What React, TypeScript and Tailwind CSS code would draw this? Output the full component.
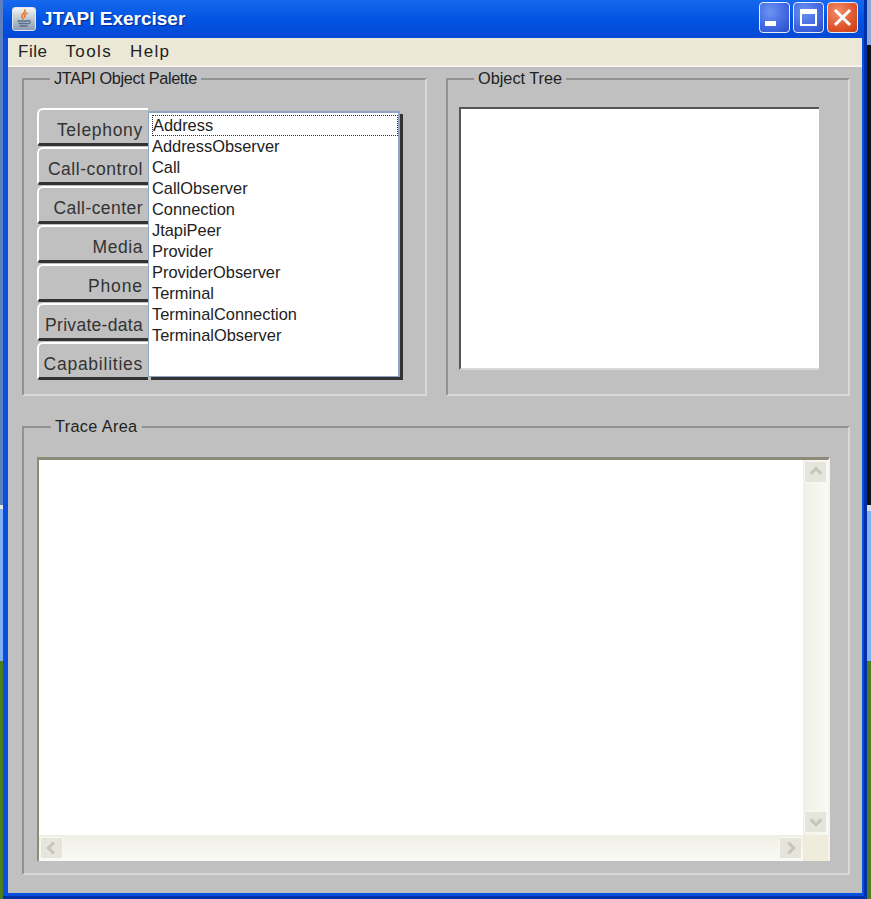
const tabs = [
  { name: "Telephony", cls: "tracking-[0.7px]" },
  { name: "Call-control", cls: "tracking-[0.55px]" },
  { name: "Call-center", cls: "tracking-[0.45px]" },
  { name: "Media", cls: "tracking-[0.55px]" },
  { name: "Phone", cls: "tracking-[0.9px]" },
  { name: "Private-data", cls: "tracking-[0.3px]" },
  { name: "Capabilities", cls: "tracking-[0.75px]" },
];
const objects = [
  "Address",
  "AddressObserver",
  "Call",
  "CallObserver",
  "Connection",
  "JtapiPeer",
  "Provider",
  "ProviderObserver",
  "Terminal",
  "TerminalConnection",
  "TerminalObserver",
];

function JavaIcon() {
  return (
    <div className="w-[24px] h-[24px] rounded-[3px] border border-[#dfe6f2] bg-gradient-to-b from-[#f4f4f0] to-[#8c9cb4] flex items-center justify-center">
      <svg width="20" height="20" viewBox="0 0 20 20" fill="none">
        <path d="M11 1c1 2-3 4-3 6s1 2 1 3M13 4c-2 1-3 2-2 4" stroke="#e8742a" strokeWidth="1.6" strokeLinecap="round" />
        <path d="M4 12h10M5 14.5h8M6 17h7" stroke="#5a6f8c" strokeWidth="1.5" strokeLinecap="round" />
        <path d="M14 11.5c3-.5 3 3-.5 3.5" stroke="#5a6f8c" strokeWidth="1.2" />
      </svg>
    </div>
  );
}

function CaptionButton({ kind }: { kind: "min" | "max" | "close" }) {
  const face =
    kind === "close"
      ? "bg-[radial-gradient(circle_at_35%_30%,#f0906c,#e0552c_60%,#c43a10)]"
      : "bg-[radial-gradient(circle_at_35%_30%,#6f93f2,#3f66e0_60%,#2a4cc8)]";
  return (
    <div className={`w-[31px] h-[31px] rounded-[4px] border border-[#e4ecfa] flex items-center justify-center ${face}`}>
      {kind === "min" && <div className="w-[11px] h-[5px] bg-white mt-[12px] mr-[8px]" />}
      {kind === "max" && (
        <div className="w-[17px] h-[17px] border-2 border-white border-t-[5px]" />
      )}
      {kind === "close" && (
        <svg width="19" height="19" viewBox="0 0 19 19">
          <path d="M3 3l13 13M16 3L3 16" stroke="#fff" strokeWidth="3" strokeLinecap="square" />
        </svg>
      )}
    </div>
  );
}

function Group({ title, legendClass, className, children }: { title: string; legendClass: string; className: string; children?: React.ReactNode }) {
  return (
    <div className={`relative border-2 border-t-[#929292] border-l-[#929292] border-r-[#d8d8d8] border-b-[#d8d8d8] ${className}`}>
      <span className={`absolute top-[-12px] bg-[#c0c0c0] px-[4px] text-[16.3px] leading-[20px] text-[#222] ${legendClass}`}>
        {title}
      </span>
      {children}
    </div>
  );
}

function ScrollButton({ dir }: { dir: "up" | "down" | "left" | "right" }) {
  const paths = {
    up: "M4 12l6-6 6 6",
    down: "M4 7l6 6 6-6",
    left: "M12 4l-6 6 6 6",
    right: "M7 4l6 6-6 6",
  };
  return (
    <div className="w-[23px] h-[22px] rounded-[2px] border border-[#f8f8f2] bg-[#e6e5dc] flex items-center justify-center">
      <svg width="18" height="18" viewBox="0 0 20 20" fill="none">
        <path d={paths[dir]} stroke="#c6c6bc" strokeWidth="3.4" />
      </svg>
    </div>
  );
}

export default function App() {
  return (
    <div className="w-[871px] h-[899px] flex overflow-hidden font-['Liberation_Sans',Arial,sans-serif] bg-[#111]">
      <div className="w-[3px] flex flex-col">
        <div className="h-[505px] bg-[#5c7fc0]" />
        <div className="h-[4px] bg-[#e8e8e8]" />
        <div className="h-[152px] bg-[#7fb2f5]" />
        <div className="flex-1 bg-[#4c7f1c]" />
      </div>

      <div className="w-[864px] flex flex-col bg-[#0a4ee0] border-r-[3px] border-b-[3px] border-[#0230a8] pb-[3px]">
        {/* title bar */}
        <div className="h-[38px] shrink-0 flex items-center pl-[9px] pr-[6px] bg-gradient-to-b from-[#1668ee] via-[#0454e2] to-[#0348d6]">
          <JavaIcon />
          <span className="ml-[6px] text-[19px] font-bold text-white [text-shadow:1px_1px_1px_#0a2a90]">JTAPI Exerciser</span>
          <div className="ml-auto flex gap-[3px] mb-[3px]">
            <CaptionButton kind="min" />
            <CaptionButton kind="max" />
            <CaptionButton kind="close" />
          </div>
        </div>

        <div className="flex-1 ml-[5px] mr-[2px] flex flex-col bg-[#c0c0c0] min-h-0">
          {/* menu bar */}
          <div className="h-[29px] shrink-0 flex items-center gap-[18px] pl-[10px] pt-[1px] bg-[#ebe8d8] border-b-2 border-[#f5f3ea] text-[17px] text-[#222]">
            <span className="tracking-[0.5px]">File</span>
            <span className="tracking-[1.4px]">Tools</span>
            <span className="tracking-[1.3px]">Help</span>
          </div>

          <div className="flex-1 flex flex-col gap-[30px] pt-[11px] pl-[14px] pr-[12px] pb-[18px]">
            <div className="h-[318px] flex gap-[19px]">
              <Group title="JTAPI Object Palette" legendClass="left-[26px] tracking-[-0.35px]" className="w-[405px] shrink-0 pl-[13px] pt-[28px]">
                <div className="flex">
                  <div className="w-[111px] flex flex-col gap-[1px]">
                    {tabs.map((t) => (
                      <div
                        key={t.name}
                        className={`h-[38px] rounded-tl-[6px] rounded-bl-[3px] border-l-2 border-t-2 border-white border-b-[3px] border-b-[#333] flex items-center justify-end pr-[5px] pt-[7px] text-[17.5px] text-[#333] bg-[#c0c0c0] ${t.cls}`}
                      >
                        {t.name}
                      </div>
                    ))}
                  </div>
                  <div className="w-[252px] h-[266px] mt-[3px] bg-white border-l border-t-2 border-r-2 border-b border-[#8ea6c6] shadow-[3px_3px_0_#333] pl-[3px] pt-[2px] text-[16.4px] text-[#222]">
                    {objects.map((o, i) => (
                      <div
                        key={o}
                        className={`h-[21px] ${i === 0 ? "w-[246px] border border-dotted border-[#333] leading-[18px]" : "leading-[21px]"}`}
                      >
                        {o}
                      </div>
                    ))}
                  </div>
                </div>
              </Group>

              <Group title="Object Tree" legendClass="left-[26px]" className="w-[404px] shrink-0 pl-[11px] pt-[27px]">
                <div className="w-[360px] h-[263px] bg-white border-t-2 border-l-2 border-[#555] border-b-2 border-b-[#d8d8d8]" />
              </Group>
            </div>

            <Group title="Trace Area" legendClass="left-[27px] tracking-[0.35px]" className="h-[449px] pl-[13px] pr-[18px] pt-[29px]">
              <div className="h-[404px] flex flex-col border-t-[3px] border-l-[2px] border-[#8c8a78] border-r-2 border-r-[#f4f4ec]">
                <div className="flex-1 flex min-h-0">
                  <div className="flex-1 bg-white" />
                  <div className="w-[25px] flex flex-col justify-between pt-[1px] pb-[2px] pl-[1px] bg-gradient-to-r from-[#f0efe6] to-[#fafaf6]">
                    <ScrollButton dir="up" />
                    <ScrollButton dir="down" />
                  </div>
                </div>
                <div className="h-[26px] flex">
                  <div className="flex-1 flex justify-between items-center px-[1px] bg-gradient-to-b from-[#f0efe6] to-[#fafaf6]">
                    <ScrollButton dir="left" />
                    <ScrollButton dir="right" />
                  </div>
                  <div className="w-[25px] bg-[#efecdc]" />
                </div>
              </div>
            </Group>
          </div>
        </div>
      </div>

      <div className="w-[4px] flex flex-col">
        <div className="h-[45px] bg-[#8aa8d8]" />
        <div className="h-[460px] bg-[#111]" />
        <div className="h-[6px] bg-[#ddd]" />
        <div className="h-[150px] bg-[#7fb2f5]" />
        <div className="flex-1 bg-[#4c7f1c]" />
      </div>
    </div>
  );
}
